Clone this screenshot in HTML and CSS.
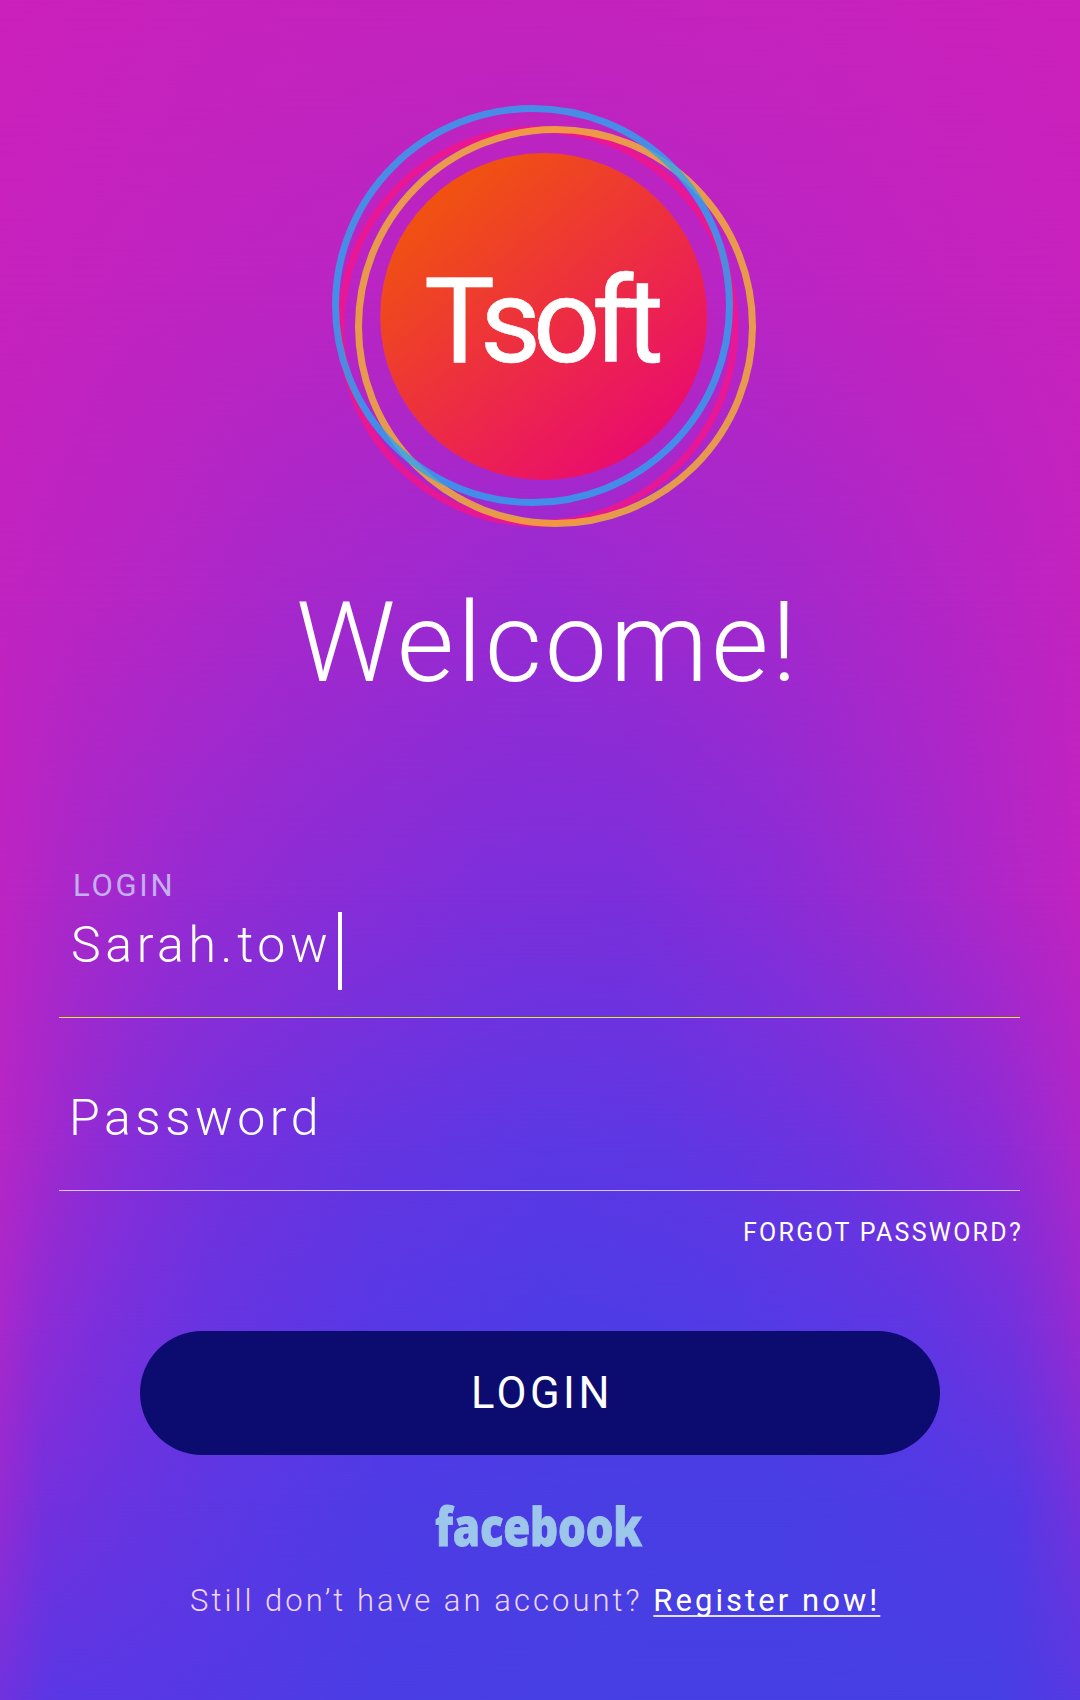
FILE: index.html
```
<!DOCTYPE html>
<html lang="en">
<head>
<meta charset="utf-8">
<title>Tsoft</title>
<link rel="stylesheet" href="styles.css">
</head>
<body>
<main class="screen">
  <div class="backdrop" aria-hidden="true">
    <i class="band b0"></i><i class="band b1"></i><i class="band b2"></i><i class="band b3"></i><i class="band b4"></i><i class="band b5"></i><i class="band b6"></i><i class="band b7"></i>
  </div>
  <svg class="logo" viewBox="0 0 450 450" role="img" aria-label="Tsoft">
    <defs>
      <linearGradient id="disc" x1="0.18" y1="0.12" x2="0.8" y2="0.88">
        <stop offset="0" stop-color="#f05210"/>
        <stop offset="1" stop-color="#ea0e6c"/>
      </linearGradient>
    </defs>
    <circle cx="223.7" cy="226.5" r="163.5" fill="url(#disc)"/>
    <g fill="none" stroke-width="7">
      <circle cx="218" cy="236.500" r="197" stroke="#f5148a" stroke-opacity=".8"/>
      <circle cx="235.500" cy="236.500" r="197" stroke="#f4b82e" stroke-opacity=".8"/>
      <circle cx="212.500" cy="215.500" r="197" stroke="#2aa6f0" stroke-opacity=".8"/>
    </g>
    <text class="brand" x="104" y="272">Tsoft</text>
  </svg>
  <h1 class="title">Welcome!</h1>
  <form class="form">
    <div class="field active">
      <label class="label">LOGIN</label>
      <div class="value"><span>Sarah.tow</span><i class="caret"></i></div>
    </div>
    <div class="field"><div class="value">Password</div></div>
    <a class="forgot">FORGOT PASSWORD?</a>
    <button class="submit" type="button">LOGIN</button>
  </form>
  <svg class="facebook" viewBox="0 0 240 50"><text x="15" y="46" textLength="207" lengthAdjust="spacingAndGlyphs">facebook</text></svg>
  <p class="signup">Still don’t have an account? <a class="register">Register now!</a></p>
</main>
</body>
</html>
```
FILE: styles.css
```
* { box-sizing: border-box; }
body { margin: 0; font-family: Roboto, sans-serif; color: #fff; }
.screen {
  position: relative;
  display: flex;
  flex-direction: column;
  width: 1080px;
  height: 1700px;
  overflow: hidden;
}

/* Colour mesh: each band fades in over the one above it */
.backdrop { position: absolute; inset: 0; z-index: -1; }
.band { position: absolute; left: 0; right: 0; bottom: 0; -webkit-mask-image: linear-gradient(transparent, #000 var(--fade)); mask-image: linear-gradient(transparent, #000 var(--fade)); }
.b0 { top: -1px; --fade: 1px; background: linear-gradient(90deg, #cc20bc, #c622bd 20%, #c323bd 50%, #c722bd 78%, #cc20bc); }
.b1 { top: 0; --fade: 300px; background: linear-gradient(90deg, #c622be, #be24c1 18%, #b825c4 36%, #b426c6 52%, #b925c4 70%, #c223bf 88%, #c722be); }
.b2 { top: 300px; --fade: 300px; background: linear-gradient(90deg, #c023c0, #b326c6 15%, #a728cb 26%, #972ad3 50%, #a528cb 74%, #b625c5 89%, #c223bf); }
.b3 { top: 600px; --fade: 300px; background: linear-gradient(90deg, #bd24c2, #a828ca 7%, #962bd2 17%, #882dd7 30%, #7c2fdb 45%, #7a2fdb 58%, #882dd8 71%, #9f29ce 85%, #b126c7 93%, #bf23c1); }
.b4 { top: 900px; --fade: 250px; background: linear-gradient(90deg, #b526c6, #992ad0 6%, #852ed9 12%, #7431dd 20%, #6535e1 34%, #5b38e4 50%, #5e37e3 62%, #6d33df 78%, #8a2cd7 92%, #ab27ca); }
.b5 { top: 1150px; --fade: 180px; background: linear-gradient(90deg, #a728cb, #8c2cd7 4%, #7c2fdc 9%, #6834e1 19%, #5738e5 35%, #4d3ce5 52%, #513be5 68%, #6036e3 85%, #7431dd 94%, #972ad1); }
.b6 { top: 1330px; --fade: 170px; background: linear-gradient(90deg, #942bd3, #7530dd 4%, #6834e1 12%, #5a38e4 23%, #4f3be5 35%, #493ee3 55%, #483ee4 72%, #503be5 86%, #5539e4 94%, #7631dc); }
.b7 { top: 1500px; --fade: 200px; background: linear-gradient(90deg, #7032de, #5a37e4 5%, #5638e4 17%, #4a3de4 35%, #463fe3 60%, #463fe3 92%, #5639e3); }

.logo { width: 450px; height: 450px; margin: 90px 0 0 320px; }
.brand { font: 400 119px Roboto, sans-serif; letter-spacing: -8.500px; fill: #fff; stroke: #fff; stroke-width: .6px; }
.title { margin: 38px 0 0 296px; font-size: 111px; line-height: 130px; font-weight: 300; letter-spacing: 2.850px; height: 130px; white-space: nowrap; }
.form { display: flex; flex-direction: column; margin: 160px 60px 0 59px; }
.field { border-bottom: 1px solid #d6c5ef; height: 173px; padding: 70px 0 0 10px; }
.active { border-color: #d3f02f; height: 150px; padding: 0 0 0 12px; }
.label { display: block; margin-left: 2px; height: 36px; font-size: 31px; line-height: 36px; letter-spacing: 2.700px; color: #c3aff2; }
.value { display: flex; align-items: flex-start; font-size: 50px; line-height: 60px; font-weight: 300; letter-spacing: 4.500px; }
.active .value { padding-top: 11px; letter-spacing: 4.600px; height: 71px; }
.caret { width: 4px; height: 78px; background: #fff; margin: -3px 0 0 6px; }
.forgot { align-self: flex-end; margin: 26px -3px 0 0; font-size: 25px; line-height: 32px; letter-spacing: 2.250px; }
.submit { width: 800px; height: 124px; margin: 82px 0 0 81px; border: 0; border-radius: 62px; background: #0c0c70; color: #fff; font: 400 43.500px Roboto, sans-serif; letter-spacing: 3.500px; padding: 1px 0 0 4px; }
.facebook { width: 240px; height: 50px; margin: 45px 0 0 420px; overflow: visible; }
.facebook text { font: 900 53px "Noto Sans", sans-serif; letter-spacing: -.3px; fill: #9dc7ea; stroke: #9dc7ea; stroke-width: .8px; }
.signup { margin: 31px 0 0 190px; font-size: 31px; line-height: 40px; font-weight: 300; letter-spacing: 3.050px; white-space: nowrap; color: #eed5fa; }
.register { font-weight: 400; color: #fff; text-decoration: underline #e4defb 2px; text-underline-offset: 4px; text-decoration-skip-ink: none; }
```
